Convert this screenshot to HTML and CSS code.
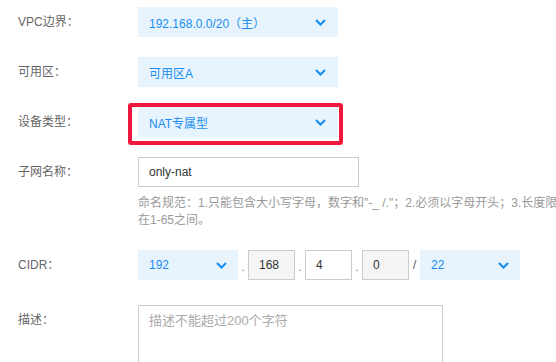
FILE: index.html
```html
<!DOCTYPE html>
<html lang="zh">
<head>
<meta charset="utf-8">
<link rel="stylesheet" href="styles.css">
</head>
<body>
<form class="form">
  <div class="row">
    <label class="label">VPC边界：</label>
    <div class="select">
      <span class="select-text">192.168.0.0/20（主）</span>
      <svg class="chev" width="11" height="7" viewBox="0 0 11 7"><path d="M1 1 L5.5 5.5 L10 1" fill="none" stroke="#1a8ef0" stroke-width="2.2"/></svg>
    </div>
  </div>
  <div class="row">
    <label class="label">可用区：</label>
    <div class="select">
      <span class="select-text">可用区A</span>
      <svg class="chev" width="11" height="7" viewBox="0 0 11 7"><path d="M1 1 L5.5 5.5 L10 1" fill="none" stroke="#1a8ef0" stroke-width="2.2"/></svg>
    </div>
  </div>
  <div class="row">
    <label class="label">设备类型：</label>
    <div class="select highlighted">
      <span class="select-text">NAT专属型</span>
      <svg class="chev" width="11" height="7" viewBox="0 0 11 7"><path d="M1 1 L5.5 5.5 L10 1" fill="none" stroke="#1a8ef0" stroke-width="2.2"/></svg>
    </div>
  </div>
  <div class="row row-name">
    <label class="label">子网名称：</label>
    <div class="field">
      <div class="input name-input">only-nat</div>
      <div class="help">命名规范：1.只能包含大小写字母，数字和"-_ /."；2.必须以字母开头；3.长度限制<br>在1-65之间。</div>
    </div>
  </div>
  <div class="row row-cidr">
    <label class="label">CIDR：</label>
    <div class="cidr">
      <div class="select small">
        <span class="select-text">192</span>
        <svg class="chev" width="11" height="7" viewBox="0 0 11 7"><path d="M1 1 L5.5 5.5 L10 1" fill="none" stroke="#1a8ef0" stroke-width="2.2"/></svg>
      </div>
      <span class="sep dot">.</span>
      <div class="input octet disabled">168</div>
      <span class="sep dot">.</span>
      <div class="input octet">4</div>
      <span class="sep dot">.</span>
      <div class="input octet disabled">0</div>
      <span class="sep slash">/</span>
      <div class="select small">
        <span class="select-text">22</span>
        <svg class="chev" width="11" height="7" viewBox="0 0 11 7"><path d="M1 1 L5.5 5.5 L10 1" fill="none" stroke="#1a8ef0" stroke-width="2.2"/></svg>
      </div>
    </div>
  </div>
  <div class="row">
    <label class="label">描述：</label>
    <div class="textarea"><span class="placeholder">描述不能超过200个字符</span></div>
  </div>
</form>
</body>
</html>
```

FILE: styles.css
```css
html, body {
  margin: 0;
  padding: 0;
  overflow: hidden;
  background: #fff;
}
body {
  font-family: "Liberation Sans", "Noto Sans CJK SC", sans-serif;
  font-size: 12px;
  color: #333;
}
.form {
  padding: 7px 0 0 18px;
}
.row {
  display: flex;
  align-items: flex-start;
  margin-bottom: 20px;
}
.row-name {
  margin-bottom: 21px;
}
.row-cidr {
  margin-bottom: 25px;
}
.label {
  width: 120px;
  flex: none;
  line-height: 30px;
  color: #666;
}
.select {
  position: relative;
  box-sizing: border-box;
  width: 200px;
  height: 30px;
  background: #e8f4fd;
  display: flex;
  align-items: center;
  justify-content: space-between;
  padding: 0 12px 0 11px;
  color: #1a8ef0;
  flex: none;
}
.select.small {
  width: 100px;
  padding-right: 11px;
}
.chev {
  display: block;
}
.highlighted::after {
  content: "";
  position: absolute;
  left: -10px;
  right: -5px;
  top: -4px;
  bottom: -8px;
  border: 4px solid #f0173c;
  border-radius: 3px;
}
.field {
  display: flex;
  flex-direction: column;
}
.input {
  box-sizing: border-box;
  height: 30px;
  border: 1px solid #ccc;
  background: #fff;
  line-height: 28px;
  padding: 0 10px;
  color: #333;
}
.name-input {
  width: 221px;
}
.help {
  margin-top: 8px;
  line-height: 17px;
  color: #999;
  white-space: nowrap;
}
.cidr {
  display: flex;
  align-items: flex-start;
  height: 30px;
}
.octet {
  width: 47px;
}
.octet.disabled {
  background: #f5f5f5;
}
.sep {
  box-sizing: border-box;
  width: 10px;
  height: 30px;
  text-align: center;
  color: #666;
  line-height: 30px;
  flex: none;
}
.dot {
  font-size: 11px;
  line-height: 12px;
  padding-top: 11px;
}
.slash {
  width: 11px;
  font-size: 13px;
}
.textarea {
  box-sizing: border-box;
  width: 305px;
  height: 90px;
  border: 1px solid #ccc;
  padding: 6px 10px;
}
.placeholder {
  font-size: 13px;
  color: #aaa;
  line-height: 18px;
}
```
